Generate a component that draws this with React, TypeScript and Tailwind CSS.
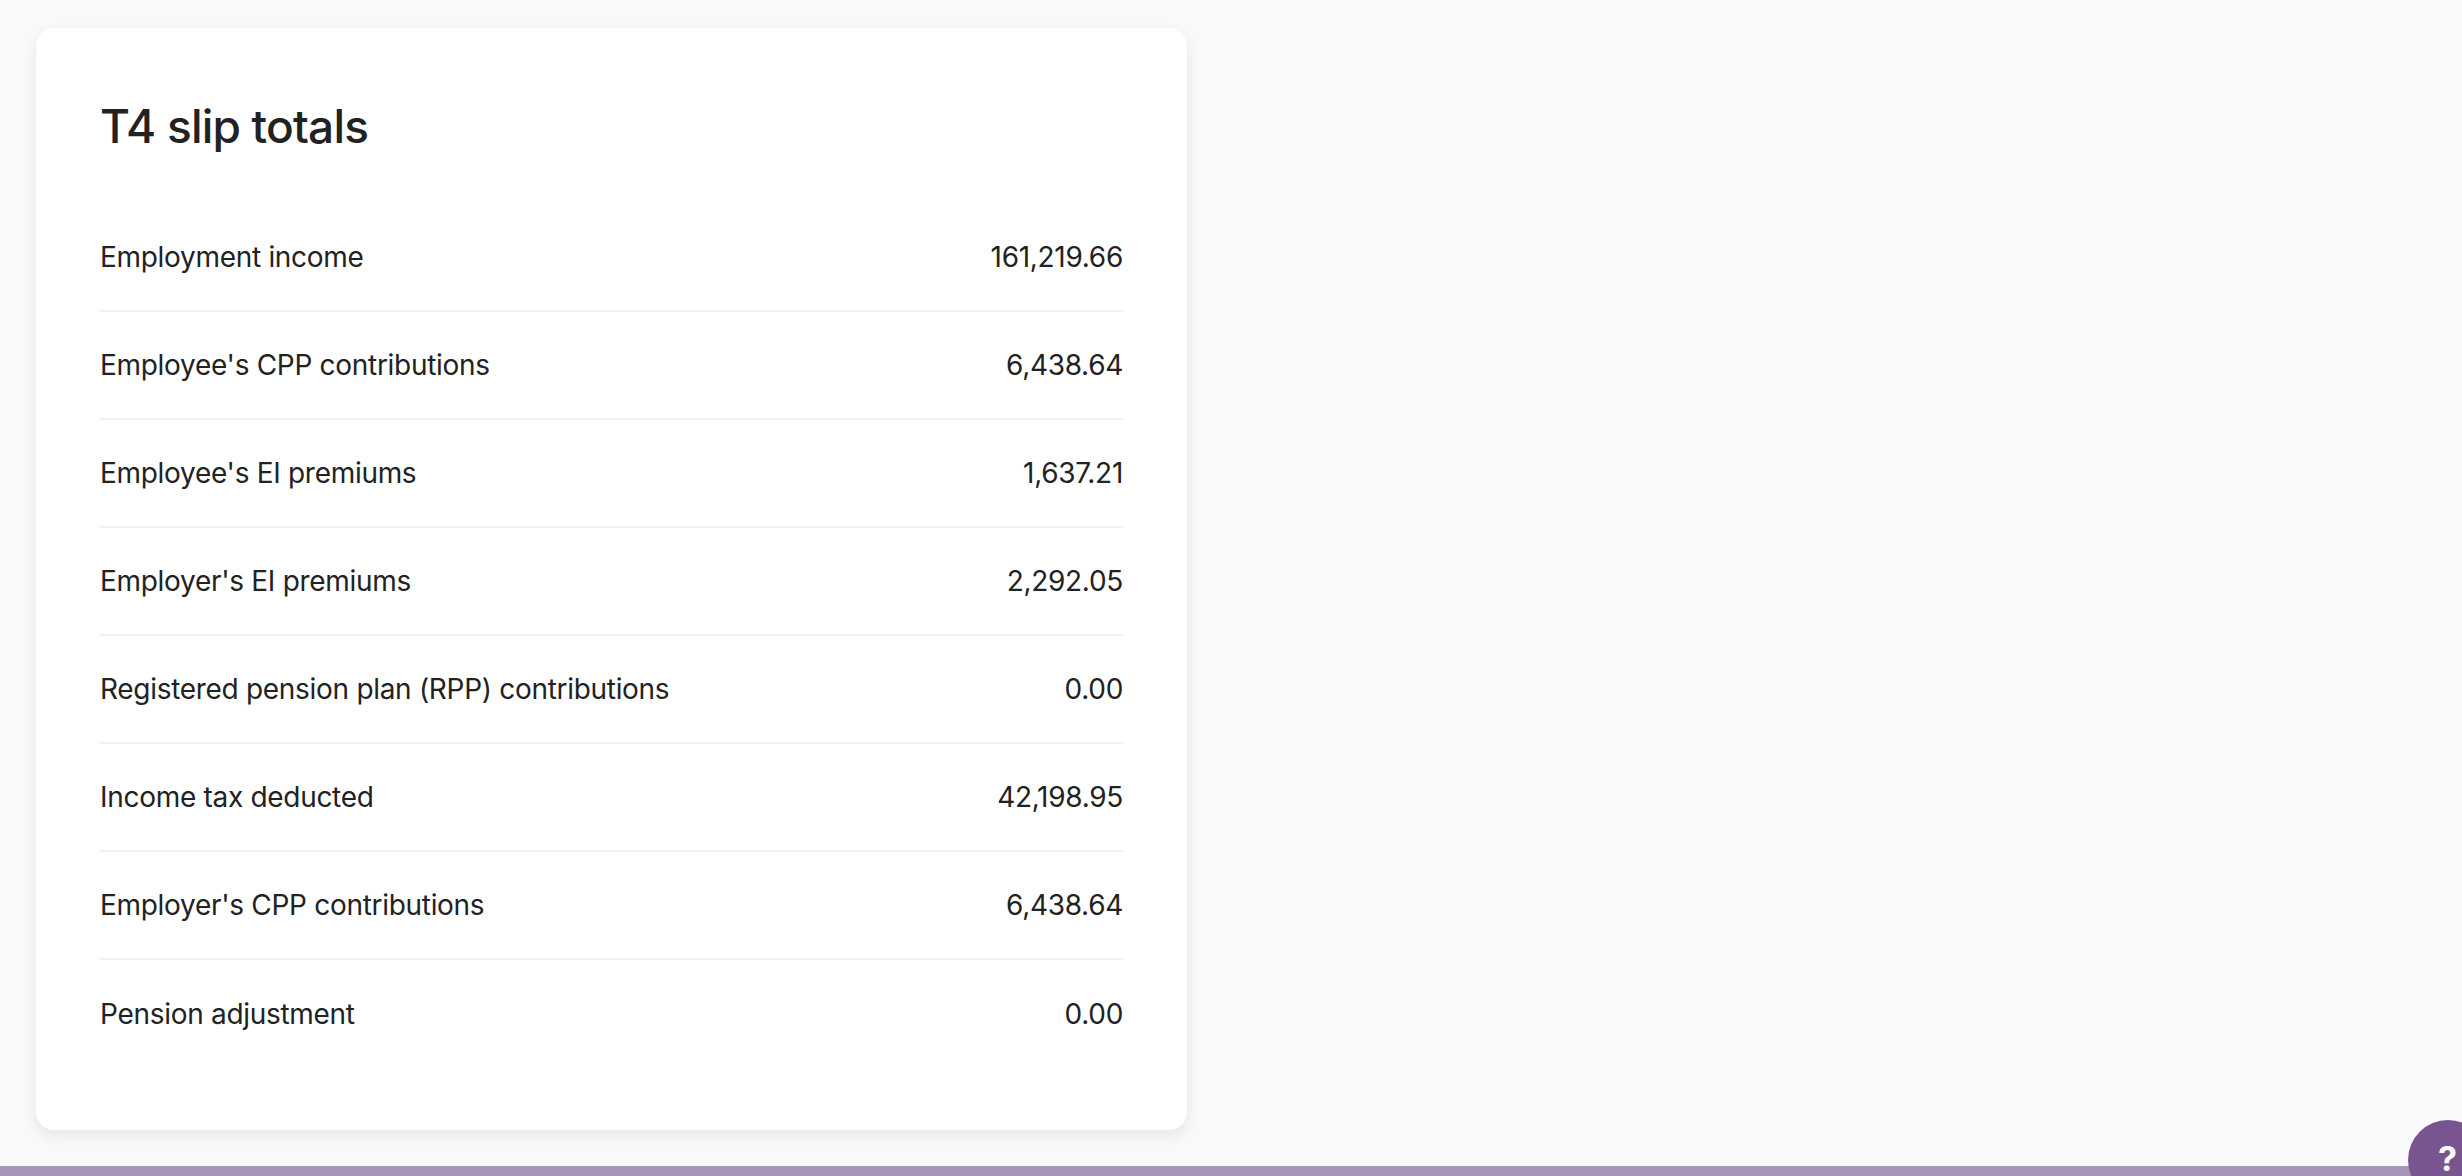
const rows: [string, string][] = [
  ['Employment income', '161,219.66'],
  ["Employee's CPP contributions", '6,438.64'],
  ["Employee's EI premiums", '1,637.21'],
  ["Employer's EI premiums", '2,292.05'],
  ['Registered pension plan (RPP) contributions', '0.00'],
  ['Income tax deducted', '42,198.95'],
  ["Employer's CPP contributions", '6,438.64'],
  ['Pension adjustment', '0.00'],
];

export default function App() {
  return (
    <div className="relative h-[1176px] w-full overflow-hidden bg-[#f9f9fb] font-[Inter,sans-serif] text-[#222]">
      <div className="pl-[36px] pt-[28px]">
        <div className="w-[1151px] rounded-[18px] bg-white px-[64px] pt-[70px] pb-[62px] shadow-[0_6px_14px_rgba(0,0,0,0.08)]">
          <h1 className="text-[46px] font-medium leading-[56px] tracking-[-0.8px]">T4 slip totals</h1>
          <div className="mt-[50px]">
            {rows.map(([label, value], i) => (
              <div
                key={label}
                className={`flex h-[108px] items-center justify-between text-[28px] tracking-[-0.3px] ${i < rows.length - 1 ? 'border-b-2 border-[#f0f0f0]' : ''}`}
              >
                <span>{label}</span>
                <span>{value}</span>
              </div>
            ))}
          </div>
        </div>
      </div>
      <div className="absolute bottom-0 left-0 h-[10px] w-full bg-[#a994b9]" />
      <div className="absolute left-[2408px] top-[1120px] flex h-[80px] w-[80px] items-start rounded-full bg-[#785590] pl-[30px] pt-[22px] text-[34px] font-bold leading-none text-white">
        ?
      </div>
    </div>
  );
}
